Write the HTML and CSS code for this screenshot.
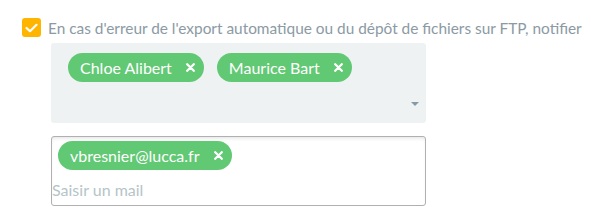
FILE: index.html
```html
<!DOCTYPE html>
<html>
<head>
<meta charset="utf-8">
<link rel="stylesheet" href="styles.css">
</head>
<body>
<div class="field">
  <label class="check-row">
    <span class="checkbox">
      <svg width="13" height="10" viewBox="0 0 13 10"><path d="M1.5 5 L5 8.2 L11.5 1.8" fill="none" stroke="#fff" stroke-width="2.2" stroke-linecap="round" stroke-linejoin="round"/></svg>
    </span>
    <span class="label-text">En cas d'erreur de l'export automatique ou du dépôt de fichiers sur FTP, notifier</span>
  </label>
  <div class="indent">
    <div class="select">
      <div class="chips">
        <span class="chip">Chloe Alibert <svg class="x" width="9" height="9" viewBox="0 0 9 9"><path d="M1.2 1.2 L7.8 7.8 M7.8 1.2 L1.2 7.8" stroke="#fff" stroke-width="2.3" stroke-linecap="round"/></svg></span>
        <span class="chip">Maurice Bart <svg class="x" width="9" height="9" viewBox="0 0 9 9"><path d="M1.2 1.2 L7.8 7.8 M7.8 1.2 L1.2 7.8" stroke="#fff" stroke-width="2.3" stroke-linecap="round"/></svg></span>
      </div>
      <span class="arrow"></span>
    </div>
    <div class="mail">
      <div class="chips">
        <span class="chip">vbresnier@lucca.fr <svg class="x" width="9" height="9" viewBox="0 0 9 9"><path d="M1.2 1.2 L7.8 7.8 M7.8 1.2 L1.2 7.8" stroke="#fff" stroke-width="2.3" stroke-linecap="round"/></svg></span>
      </div>
      <div class="placeholder">Saisir un mail</div>
    </div>
  </div>
</div>
</body>
</html>
```
FILE: styles.css
```css
html, body { margin: 0; padding: 0; background: #fff; }
body { font-family: "Lato", "Open Sans", sans-serif; }
.field { padding: 18px 0 0 22px; }
.check-row { display: flex; align-items: center; gap: 7px; height: 19px; }
.checkbox {
  width: 19px; height: 19px; border-radius: 3px; background: #ffb400;
  display: flex; align-items: center; justify-content: center; flex: none;
}
.label-text { font-size: 15.4px; color: #8b9aa4; white-space: nowrap; }
.indent { padding-left: 29px; padding-top: 6px; width: 375px; }
.select {
  position: relative; background: #eef2f3; border-radius: 3px; height: 80px;
  box-sizing: border-box; padding: 10px 0 0 17px;
}
.chips { display: flex; gap: 13px; }
.chip {
  display: inline-flex; align-items: center; height: 29px; border-radius: 15px;
  background: #61c873; color: #fff; font-size: 16px; padding: 0 9px 0 12px;
  box-sizing: border-box;
}
.x { margin-left: 14px; flex: none; }
.arrow {
  position: absolute; right: 7px; top: 59px; width: 0; height: 0;
  border-left: 4px solid transparent; border-right: 4px solid transparent;
  border-top: 4px solid #849aa4;
}
.mail {
  margin-top: 13px; height: 70px; box-sizing: border-box; border: 1px solid #b0b0b0;
  border-radius: 3px; padding: 4px 0 0 6px; box-shadow: inset 0 3px 4px -2px rgba(0,0,0,0.12);
}
.placeholder { font-size: 16px; color: #b5c4c8; margin: 10px 0 0 -6px; }
```
